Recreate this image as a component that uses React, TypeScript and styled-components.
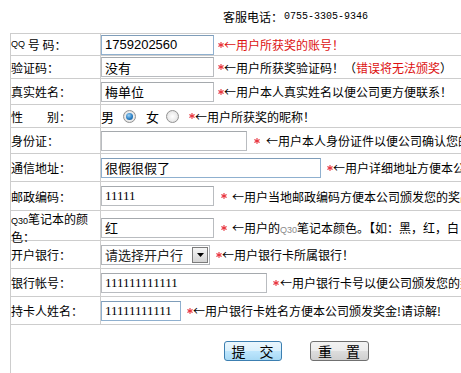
import React from "react";
import styled, { createGlobalStyle } from "styled-components";

const Global = createGlobalStyle`
  html, body { margin: 0; padding: 0; overflow: hidden; background: #fff; }
  body { font-family: "Noto Sans CJK SC", "Liberation Sans", sans-serif; font-size: 12px; color: #000; }
`;

const Page = styled.div`
  padding-left: 10px;
  width: 571px;
`;

const Header = styled.div`
  height: 33px;
  display: flex;
  align-items: center;
  padding-left: 213px;
  font-size: 12px;
  white-space: nowrap;
`;

const Phone = styled.span`
  font-family: "Liberation Mono", monospace;
  font-size: 10px;
  margin-left: 1px;
`;

const Table = styled.div`
  width: 570px;
  border-left: 1px solid #cdcdcd;
  border-top: 1px solid #cdcdcd;
`;

const Row = styled.div<{ $h: number }>`
  display: grid;
  grid-template-columns: 90px 1fr;
  height: ${(p) => p.$h}px;
  border-bottom: 1px solid #cdcdcd;
`;

const Label = styled.div`
  box-sizing: border-box;
  border-right: 1px solid #cdcdcd;
  display: flex;
  align-items: center;
  line-height: 15px;
  white-space: nowrap;
`;

const Small = styled.span<{ $gray?: boolean }>`
  font-family: "Liberation Sans", sans-serif;
  font-size: 9px;
  color: ${(p) => (p.$gray ? "#8a8a8a" : "#000")};
`;

const Cell = styled.div`
  display: flex;
  align-items: center;
  white-space: nowrap;
  overflow: hidden;
`;

const Field = styled.input<{ $w: number; $blue?: boolean; $font?: "sans" | "serif" | "cjk" }>`
  box-sizing: border-box;
  width: ${(p) => p.$w}px;
  height: 20px;
  margin: 0;
  padding: 0 0 0 3px;
  border: 1px solid ${(p) => (p.$blue ? "#8fb0cf" : "#b9bcc0")};
  border-top-color: ${(p) => (p.$blue ? "#7f9db9" : "#a5a9ad")};
  outline: none;
  background: #fff;
  color: #000;
  font-family: ${(p) =>
    p.$font === "serif"
      ? '"Liberation Serif", serif'
      : p.$font === "sans"
      ? '"Liberation Sans", sans-serif'
      : '"Noto Sans CJK SC", sans-serif'};
  font-size: 13px;
  flex: none;
`;

const Star = styled.svg<{ $ml?: number }>`
  width: 6px;
  height: 6px;
  margin-left: ${(p) => p.$ml ?? 4}px;
  flex: none;
`;

const Hint = styled.span<{ $red?: boolean; $ml?: number }>`
  margin-left: ${(p) => p.$ml ?? 0}px;
  color: ${(p) => (p.$red ? "#dd1111" : "#000")};
  font-size: 12px;
`;

const Red = styled.span`
  color: #dd1111;
`;

const Choice = styled.span<{ $ml: number }>`
  font-size: 13px;
  margin-left: ${(p) => p.$ml}px;
`;

const Radio = styled.span<{ $checked?: boolean; $ml: number }>`
  box-sizing: border-box;
  width: 13px;
  height: 13px;
  margin-left: ${(p) => p.$ml}px;
  border-radius: 50%;
  border: 1px solid #929292;
  background: radial-gradient(circle at 50% 50%, #ffffff 0, #ececec 55%, #d2d2d2 100%);
  display: inline-flex;
  align-items: center;
  justify-content: center;
  flex: none;
  &::after {
    content: "";
    width: 7px;
    height: 7px;
    border-radius: 50%;
    background: ${(p) =>
      p.$checked
        ? "radial-gradient(circle at 40% 35%, #9fd2f5 0, #2a7fc4 55%, #0d4a80 100%)"
        : "transparent"};
  }
`;

const SelectBox = styled.div`
  box-sizing: border-box;
  width: 109px;
  height: 20px;
  border: 1px solid #b3b6ba;
  display: flex;
  align-items: center;
  justify-content: space-between;
  padding: 0 1px 0 3px;
  font-size: 13px;
  color: #222;
  flex: none;
`;

const SelectBtn = styled.span`
  box-sizing: border-box;
  width: 16px;
  height: 16px;
  border: 1px solid #7c7c7c;
  background: linear-gradient(#f6f6f6, #d4d4d4);
  display: flex;
  align-items: center;
  justify-content: center;
`;

const ButtonRow = styled.div`
  height: 48px;
  display: flex;
  justify-content: center;
  align-items: flex-start;
  padding-top: 16px;
  gap: 28px;
`;

const Btn = styled.button<{ $primary?: boolean }>`
  box-sizing: border-box;
  width: ${(p) => (p.$primary ? 58 : 59)}px;
  height: 20px;
  padding: 0;
  margin: 0;
  border-radius: 3px;
  border: 1px solid ${(p) => (p.$primary ? "#3c7fb1" : "#707070")};
  background: ${(p) =>
    p.$primary
      ? "linear-gradient(#eaf6fd 0%, #d9f0fc 50%, #bee6fd 51%, #a7d9f5 100%)"
      : "linear-gradient(#f2f2f2 0%, #ebebeb 50%, #dddddd 51%, #cfcfcf 100%)"};
  font-family: "Noto Sans CJK SC", sans-serif;
  font-size: 14px;
  line-height: 18px;
  color: #000;
`;

const StarIcon = ({ ml }: { ml?: number }) => (
  <Star $ml={ml} viewBox="0 0 6 6">
    <g stroke="#e8323c" strokeWidth="1.1" strokeLinecap="round">
      <line x1="3" y1="0.5" x2="3" y2="5.5" />
      <line x1="0.8" y1="1.7" x2="5.2" y2="4.3" />
      <line x1="0.8" y1="4.3" x2="5.2" y2="1.7" />
    </g>
  </Star>
);

export default function App() {
  return (
    <>
      <Global />
      <Page>
        <Header>
          客服电话：<Phone>0755-3305-9346</Phone>
        </Header>
        <Table>
          <Row $h={21}>
            <Label>
              <Small>QQ</Small>&nbsp;号&nbsp;码：
            </Label>
            <Cell>
              <Field $w={113} $blue $font="sans" defaultValue="1759202560" readOnly />
              <StarIcon />
              <Hint $red>←用户所获奖的账号！</Hint>
            </Cell>
          </Row>
          <Row $h={22}>
            <Label>验证码：</Label>
            <Cell>
              <Field $w={113} defaultValue="没有" readOnly />
              <StarIcon />
              <Hint>
                ←用户所获奖验证码！（<Red>错误将无法颁奖</Red>）
              </Hint>
            </Cell>
          </Row>
          <Row $h={25}>
            <Label>真实姓名：</Label>
            <Cell>
              <Field $w={113} defaultValue="梅单位" readOnly />
              <StarIcon />
              <Hint>←用户本人真实姓名以便公司更方便联系！</Hint>
            </Cell>
          </Row>
          <Row $h={22}>
            <Label>性　　别：</Label>
            <Cell>
              <Choice $ml={0}>男</Choice>
              <Radio $checked $ml={9} />
              <Choice $ml={10}>女</Choice>
              <Radio $ml={7} />
              <StarIcon ml={10} />
              <Hint>←用户所获奖的昵称！</Hint>
            </Cell>
          </Row>
          <Row $h={25}>
            <Label>身份证：</Label>
            <Cell>
              <Field $w={146} readOnly defaultValue="" />
              <StarIcon ml={7} />
              <Hint $ml={6}>←用户本人身份证件以便公司确认您的</Hint>
            </Cell>
          </Row>
          <Row $h={27}>
            <Label>通信地址：</Label>
            <Cell>
              <Field $w={220} $blue defaultValue="很假很假了" readOnly />
              <StarIcon ml={6} />
              <Hint>←用户详细地址方便本公司</Hint>
            </Cell>
          </Row>
          <Row $h={28}>
            <Label>邮政编码：</Label>
            <Cell>
              <Field $w={113} $font="serif" defaultValue="11111" readOnly />
              <StarIcon ml={7} />
              <Hint $ml={5}>←用户当地邮政编码方便本公司颁发您的奖品</Hint>
            </Cell>
          </Row>
          <Row $h={29}>
            <Label>
              <span>
                <Small>Q30</Small>笔记本的颜
                <br />
                色：
              </span>
            </Label>
            <Cell>
              <Field $w={113} defaultValue="红" readOnly />
              <StarIcon ml={7} />
              <Hint $ml={5}>
                ←用户的<Small $gray>Q30</Small>笔记本颜色。【如：黑，红，白
              </Hint>
            </Cell>
          </Row>
          <Row $h={27}>
            <Label>开户银行：</Label>
            <Cell>
              <SelectBox>
                请选择开户行
                <SelectBtn>
                  <svg width="7" height="4" viewBox="0 0 7 4">
                    <path d="M0 0 H7 L3.5 4 Z" fill="#000" />
                  </svg>
                </SelectBtn>
              </SelectBox>
              <StarIcon ml={6} />
              <Hint>←用户银行卡所属银行！</Hint>
            </Cell>
          </Row>
          <Row $h={27}>
            <Label>银行帐号：</Label>
            <Cell>
              <Field $w={166} $font="serif" defaultValue="111111111111" readOnly />
              <StarIcon ml={6} />
              <Hint $ml={1}>←用户银行卡号以便公司颁发您的奖</Hint>
            </Cell>
          </Row>
          <Row $h={27}>
            <Label>持卡人姓名：</Label>
            <Cell>
              <Field $w={80} $blue $font="serif" defaultValue="11111111111" readOnly />
              <StarIcon ml={6} />
              <Hint>←用户银行卡姓名方便本公司颁发奖金!请谅解!</Hint>
            </Cell>
          </Row>
          <ButtonRow>
            <Btn $primary>提　交</Btn>
            <Btn>重　置</Btn>
          </ButtonRow>
        </Table>
      </Page>
    </>
  );
}
